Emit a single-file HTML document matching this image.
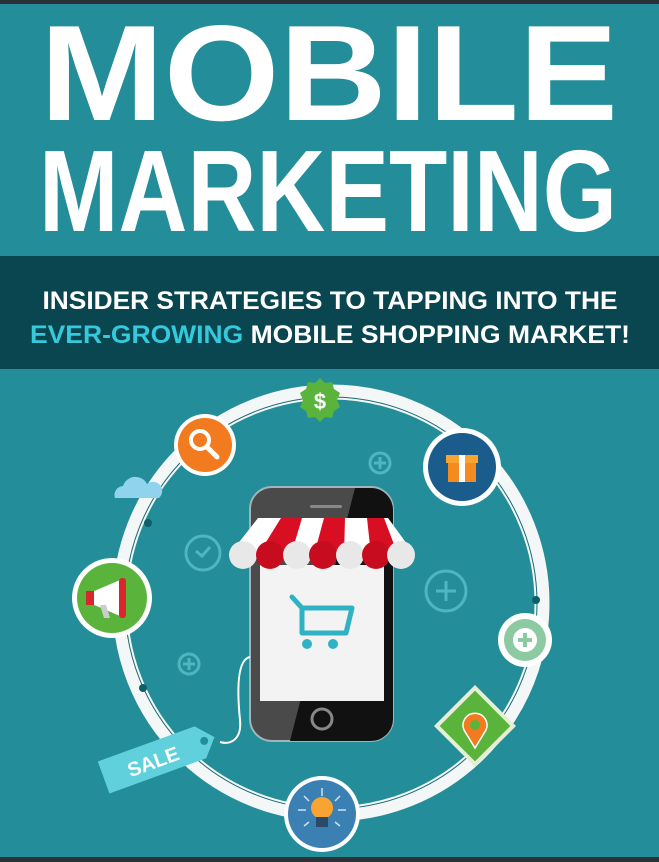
<!DOCTYPE html>
<html><head><style>
html,body{margin:0;padding:0;background:#238e99;}
svg{display:block}
</style></head><body>
<svg width="659" height="862" viewBox="0 0 659 862" xmlns="http://www.w3.org/2000/svg">
<rect width="659" height="862" fill="#238e99"/>
<rect y="0" width="659" height="4" fill="#2b3136"/>
<text x="329" y="120" text-anchor="middle" font-family="Liberation Sans, sans-serif" font-weight="bold" font-size="136" fill="#fff" textLength="578" lengthAdjust="spacingAndGlyphs">MOBILE</text>
<text x="328" y="231" text-anchor="middle" font-family="Liberation Sans, sans-serif" font-weight="bold" font-size="116" fill="#fff" textLength="578" lengthAdjust="spacingAndGlyphs">MARKETING</text>
<rect y="256" width="659" height="113" fill="#0a4650"/>
<text x="330" y="309" text-anchor="middle" font-family="Liberation Sans, sans-serif" font-weight="bold" font-size="25" fill="#fff" textLength="575" lengthAdjust="spacingAndGlyphs">INSIDER STRATEGIES TO TAPPING INTO THE</text>
<text x="330" y="343" text-anchor="middle" font-family="Liberation Sans, sans-serif" font-weight="bold" font-size="25" fill="#fff" textLength="600" lengthAdjust="spacingAndGlyphs"><tspan fill="#35c9dc">EVER-GROWING</tspan> MOBILE SHOPPING MARKET!</text>
<circle cx="331" cy="603" r="211" fill="none" stroke="#f4f7f7" stroke-width="15"/>
<circle cx="331" cy="603" r="206" fill="none" stroke="#1a6b74" stroke-width="1"/>
<g fill="none" stroke="#4fb5bf" stroke-width="3">
<circle cx="203" cy="553" r="17"/><path d="M196 551l6 5l8 -9"/>
<circle cx="380" cy="463" r="10"/><path d="M374 463h12M380 457v12"/>
<circle cx="446" cy="591" r="20"/><path d="M436 591h20M446 581v20"/>
<circle cx="189" cy="664" r="10"/><path d="M183 664h12M189 658v12"/>
</g>
<g fill="#0e5f68"><circle cx="148" cy="523" r="4"/><circle cx="536" cy="600" r="4"/><circle cx="143" cy="688" r="4"/></g>
<rect x="250" y="487" width="143" height="254" rx="22" fill="#4a4a4a" stroke="#9fb5b8" stroke-width="2"/>
<path d="M355 488 H371 a22 22 0 0 1 22 22 V719 a22 22 0 0 1 -22 22 H290 Z" fill="#111"/>
<rect x="260" y="565" width="124" height="136" fill="#f3f3f3"/>
<rect x="310" y="505" width="32" height="3" rx="1.5" fill="#888"/>
<circle cx="322" cy="719" r="10" fill="none" stroke="#888" stroke-width="3"/>
<g>
<path d="M258 518 H388 L415 555 H229 Z" fill="#fff"/>
<path d="M281 518 H302 L291 555 H258 Z M324 518 H345 L344 555 H314 Z M367 518 H384 L398 555 H371 Z" fill="#d80e22"/>
<circle cx="243" cy="555" r="14" fill="#e8e8e8"/><circle cx="270" cy="555" r="14" fill="#c80c1f"/><circle cx="297" cy="555" r="14" fill="#e8e8e8"/><circle cx="323" cy="555" r="14" fill="#c80c1f"/><circle cx="350" cy="555" r="14" fill="#e8e8e8"/><circle cx="376" cy="555" r="14" fill="#c80c1f"/><circle cx="401" cy="555" r="14" fill="#e8e8e8"/>
</g>
<g fill="none" stroke="#2fb3c4" stroke-width="5" stroke-linejoin="round" stroke-linecap="round">
<path d="M292 597 L302 608 V633 H346 L352 608 H302"/>
</g>
<circle cx="307" cy="644" r="5" fill="#2fb3c4"/><circle cx="333" cy="644" r="5" fill="#2fb3c4"/>
<path d="M250 657 C235 660 238 700 240 720 C242 740 230 745 220 742" fill="none" stroke="#fff" stroke-width="2"/>
<g transform="rotate(-20 160 757)">
<path d="M100 740 H203 L218 757 L203 774 H100 Z" fill="#5fd0dc"/>
<circle cx="207" cy="757" r="4" fill="#238e99"/>
<text x="152" y="766" text-anchor="middle" font-family="Liberation Sans, sans-serif" font-weight="bold" font-size="20" fill="#fff">SALE</text>
</g>
<path d="M115 498 a9 9 0 0 1 8 -12 a13 13 0 0 1 24 -2 a9 9 0 0 1 12 14 Z" fill="#8fd3ec"/>
<polygon points="320,378 325,383 332,382 334,389 340,393 337,400 340,407 334,411 332,418 325,417 320,422 315,417 308,418 306,411 300,407 303,400 300,393 306,389 308,382 315,383" fill="#5ab43c"/>
<text x="320" y="409" text-anchor="middle" font-family="Liberation Sans, sans-serif" font-weight="bold" font-size="22" fill="#fff">$</text>
<circle cx="205" cy="445" r="31" fill="#fff"/><circle cx="205" cy="445" r="27" fill="#f27b1f"/>
<circle cx="200" cy="440" r="9" fill="none" stroke="#fff" stroke-width="4"/><path d="M207 447 L217 457" stroke="#fff" stroke-width="5" stroke-linecap="round"/>
<circle cx="462" cy="467" r="39" fill="#fff"/><circle cx="462" cy="467" r="34" fill="#1a5c8c"/>
<rect x="448" y="462" width="28" height="20" fill="#f58a1f"/><rect x="446" y="455" width="32" height="8" fill="#f8a433"/>
<rect x="459" y="455" width="6" height="27" fill="#fff"/>
<circle cx="112" cy="598" r="40" fill="#fff"/><circle cx="112" cy="598" r="35" fill="#5ab43c"/>
<path d="M92 592 L120 580 V616 L92 604 Z" fill="#fff"/><rect x="86" y="591" width="8" height="14" fill="#d9262b"/>
<path d="M100 605 L104 618 H110 L106 605" fill="#ccc"/><rect x="119" y="578" width="7" height="40" rx="3" fill="#d9262b"/>
<circle cx="525" cy="640" r="27" fill="#fff"/><circle cx="525" cy="640" r="21" fill="#8ccaa2"/>
<circle cx="525" cy="640" r="12" fill="#fff"/><path d="M518 640h14M525 633v14" stroke="#8ccaa2" stroke-width="4"/>
<g transform="rotate(45 475 726)"><rect x="446" y="697" width="58" height="58" fill="#e6efd6"/><rect x="450" y="701" width="50" height="50" fill="#5ab43c"/></g>
<path d="M475 748 L464 730 a12 12 0 1 1 22 0 Z" fill="#f27b1f" stroke="#fff" stroke-width="1.5"/><circle cx="475" cy="725" r="5" fill="#5ab43c"/>
<circle cx="322" cy="814" r="38" fill="#fff"/><circle cx="322" cy="814" r="34" fill="#3a80b3"/>
<circle cx="322" cy="808" r="11" fill="#f8a433"/><rect x="316" y="817" width="12" height="10" fill="#2b4a6a"/>
<g stroke="#cfe3f0" stroke-width="1.5"><path d="M322 788v8M304 796l5 5M340 796l-5 5M298 810h8M346 810h-8M304 826l5 -4M340 826l-5 -4"/></g>
<rect y="857" width="659" height="5" fill="#2b3136"/>
</svg>
</body></html>
